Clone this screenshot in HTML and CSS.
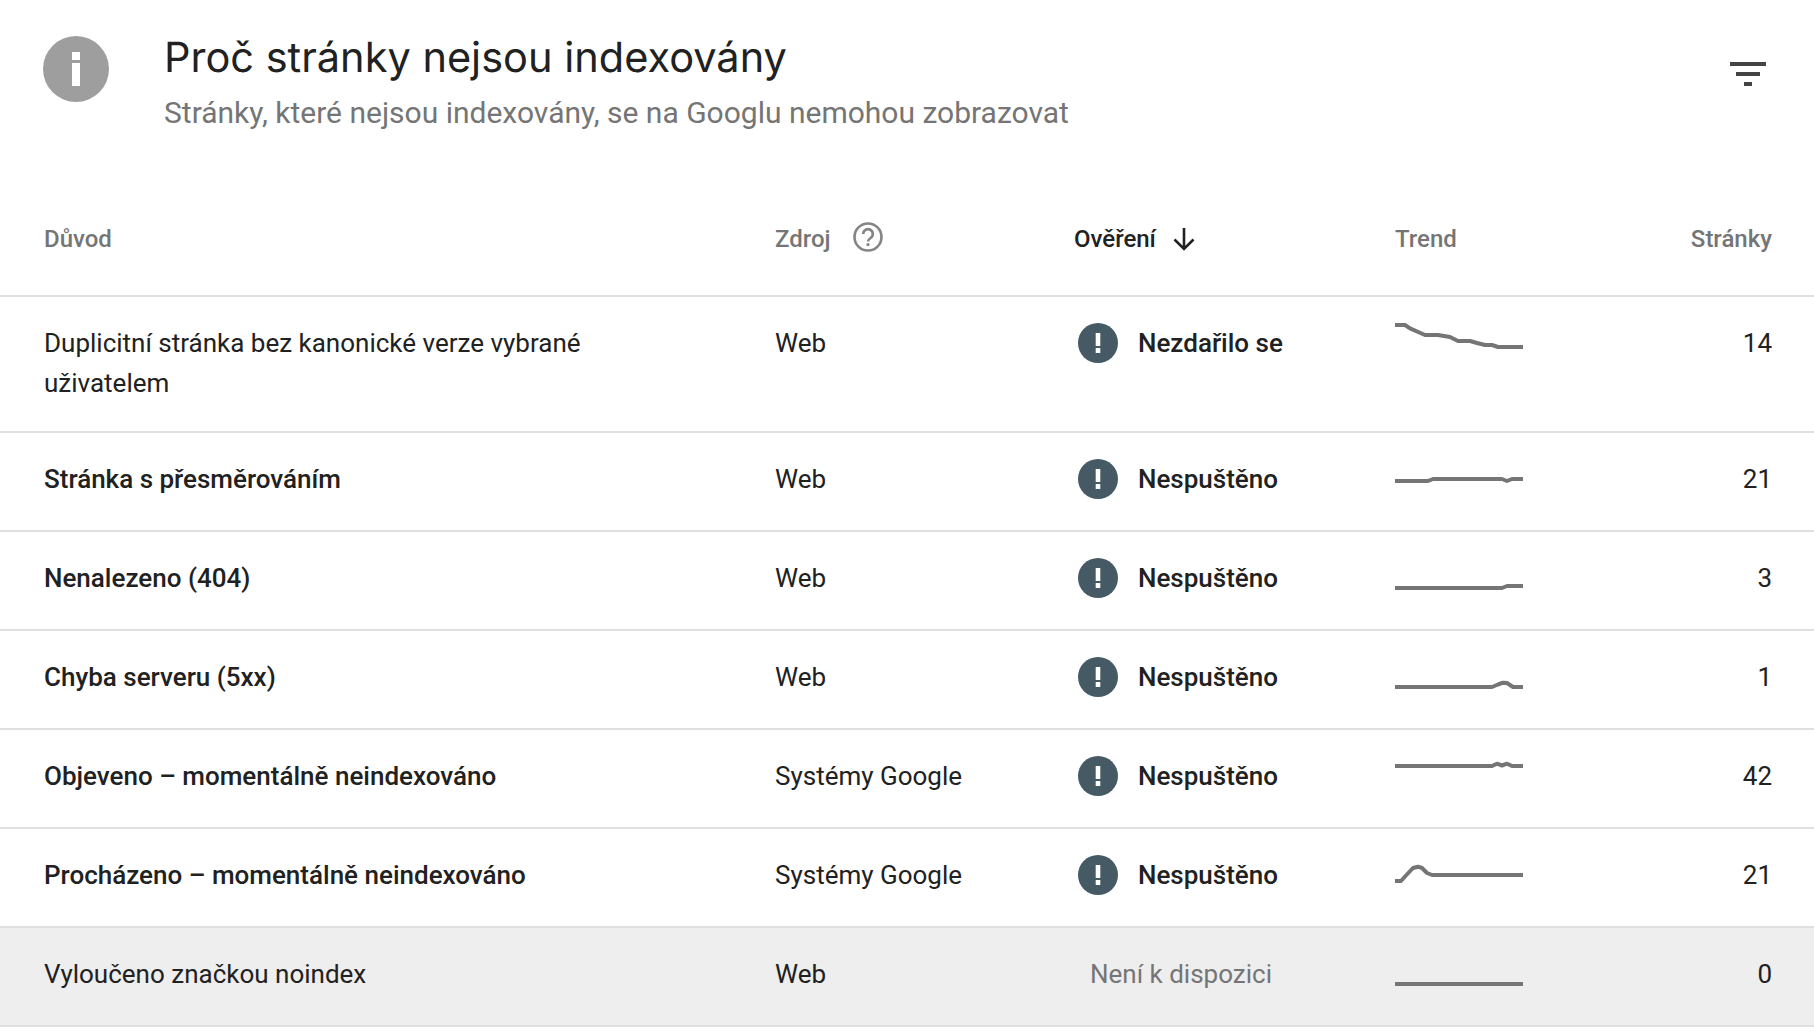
FILE: index.html
```html
<!DOCTYPE html>
<html lang="cs">
<head>
<meta charset="utf-8">
<title>Proč stránky nejsou indexovány</title>
<link rel="stylesheet" href="styles.css">
</head>
<body>
<header class="head">
  <svg class="info" viewBox="0 0 66 66"><circle cx="33" cy="33" r="33" fill="#9e9e9e"/><rect x="29" y="16" width="8" height="8" fill="#fff"/><rect x="29" y="27" width="8" height="23" fill="#fff"/></svg>
  <div class="titles">
    <h1 class="title">Proč stránky nejsou indexovány</h1>
    <p class="sub">Stránky, které nejsou indexovány, se na Googlu nemohou zobrazovat</p>
  </div>
  <svg class="filter" viewBox="0 0 36 24"><rect x="0" y="0" width="36" height="4" fill="#444"/><rect x="6" y="10" width="24" height="4" fill="#444"/><rect x="14" y="20" width="8" height="4" fill="#444"/></svg>
</header>
<div class="row thead">
  <div>Důvod</div>
  <div class="hsrc">Zdroj
    <svg class="help" viewBox="0 0 30 30"><circle cx="15" cy="15" r="13.5" fill="none" stroke="#858585" stroke-width="2.6"/><path d="M10.2 12a4.8 4.8 0 1 1 7.4 4c-1.6 1.1-2.6 1.9-2.6 3.6" fill="none" stroke="#858585" stroke-width="2.6"/><rect x="13.6" y="21.2" width="2.8" height="2.8" fill="#858585"/></svg>
  </div>
  <div class="hsort">Ověření
    <svg class="arrow" viewBox="0 0 24 24"><path d="M12 1v21M2.5 12.5l9.500 9.500 9.500-9.500" fill="none" stroke="#212121" stroke-width="2.6"/></svg>
  </div>
  <div>Trend</div>
  <div class="num">Stránky</div>
</div>
<div class="row first">
  <div class="reason">Duplicitní stránka bez kanonické verze vybrané uživatelem</div>
  <div>Web</div>
  <div class="status"><svg class="warn" viewBox="0 0 40 40"><circle cx="20" cy="20" r="20" fill="#455a64"/><rect x="17.700" y="10" width="4.600" height="13" fill="#fff"/><rect x="17.700" y="25" width="4.600" height="5" fill="#fff"/></svg>Nezdařilo se</div>
  <svg class="spark" viewBox="0 0 128 40"><polyline points="0,2 10,2 15,5.3 30,12 43,12 55,14 63,18 75,18 82,20 90,22 97,22 103,24 128,24"/></svg>
  <div class="num">14</div>
</div>
<div class="row">
  <div class="reason strong">Stránka s přesměrováním</div>
  <div>Web</div>
  <div class="status"><svg class="warn" viewBox="0 0 40 40"><circle cx="20" cy="20" r="20" fill="#455a64"/><rect x="17.700" y="10" width="4.600" height="13" fill="#fff"/><rect x="17.700" y="25" width="4.600" height="5" fill="#fff"/></svg>Nespuštěno</div>
  <svg class="spark" viewBox="0 0 128 40"><polyline points="0,22 33,22 38,20 107,20 112,22 117,20 128,20"/></svg>
  <div class="num">21</div>
</div>
<div class="row">
  <div class="reason strong">Nenalezeno (404)</div>
  <div>Web</div>
  <div class="status"><svg class="warn" viewBox="0 0 40 40"><circle cx="20" cy="20" r="20" fill="#455a64"/><rect x="17.700" y="10" width="4.600" height="13" fill="#fff"/><rect x="17.700" y="25" width="4.600" height="5" fill="#fff"/></svg>Nespuštěno</div>
  <svg class="spark" viewBox="0 0 128 40"><polyline points="0,30 107,30 112,28 128,28"/></svg>
  <div class="num">3</div>
</div>
<div class="row">
  <div class="reason strong">Chyba serveru (5xx)</div>
  <div>Web</div>
  <div class="status"><svg class="warn" viewBox="0 0 40 40"><circle cx="20" cy="20" r="20" fill="#455a64"/><rect x="17.700" y="10" width="4.600" height="13" fill="#fff"/><rect x="17.700" y="25" width="4.600" height="5" fill="#fff"/></svg>Nespuštěno</div>
  <svg class="spark" viewBox="0 0 128 40"><polyline points="0,30 97,30 103,27.5 108,25.7 112,26 118,30 128,30"/></svg>
  <div class="num">1</div>
</div>
<div class="row">
  <div class="reason strong">Objeveno – momentálně neindexováno</div>
  <div>Systémy Google</div>
  <div class="status"><svg class="warn" viewBox="0 0 40 40"><circle cx="20" cy="20" r="20" fill="#455a64"/><rect x="17.700" y="10" width="4.600" height="13" fill="#fff"/><rect x="17.700" y="25" width="4.600" height="5" fill="#fff"/></svg>Nespuštěno</div>
  <svg class="spark" viewBox="0 0 128 40"><polyline points="0,10 97,10 102,7.700 107,9.500 112,7.700 117,10 128,10"/></svg>
  <div class="num">42</div>
</div>
<div class="row">
  <div class="reason strong">Procházeno – momentálně neindexováno</div>
  <div>Systémy Google</div>
  <div class="status"><svg class="warn" viewBox="0 0 40 40"><circle cx="20" cy="20" r="20" fill="#455a64"/><rect x="17.700" y="10" width="4.600" height="13" fill="#fff"/><rect x="17.700" y="25" width="4.600" height="5" fill="#fff"/></svg>Nespuštěno</div>
  <svg class="spark" viewBox="0 0 128 40"><polyline points="0,26 6,26 10,21.5 18,13 23,11.7 27,13 32,18 37,20 128,20"/></svg>
  <div class="num">21</div>
</div>
<div class="row muted">
  <div class="reason">Vyloučeno značkou noindex</div>
  <div>Web</div>
  <div class="na">Není k dispozici</div>
  <svg class="spark" viewBox="0 0 128 40"><polyline points="0,30 128,30"/></svg>
  <div class="num">0</div>
</div>
</body>
</html>
```
FILE: styles.css
```css
* { box-sizing: border-box; }
html, body { margin: 0; background: #fff; }
body {
  font-family: Roboto, "Noto Sans", sans-serif;
  font-size: 26px;
  line-height: 40px;
  color: #212121;
  overflow: hidden;
}
.head {
  display: flex;
  align-items: flex-start;
  height: 195px;
  padding: 36px 48px 0 43px;
}
.info { width: 66px; height: 66px; flex: none; }
.titles { margin-left: 55px; flex: 1; }
.title {
  margin: -6px 0 0;
  font-family: Inter, Roboto, sans-serif;
  font-size: 41.5px;
  line-height: 56px;
  font-weight: 400;
  text-rendering: geometricPrecision;
}
.sub { margin: 7px 0 0; font-size: 30px; line-height: 40px; color: #757575; }
.filter { width: 36px; height: 24px; margin: 26px 0 0; flex: none; }
.row {
  display: grid;
  grid-template-columns: 731px 299px 321px 128px 1fr;
  padding: 26px 42px 31px 44px;
  border-bottom: 2px solid #e0e0e0;
  height: 99px;
}
.row.first { height: 136px; }
.thead {
  height: 102px;
  padding-top: 24px;
  font-size: 24px;
  font-weight: 500;
  color: #757575;
}
.hsrc { display: flex; align-items: center; gap: 22px; height: 40px; }
.help { width: 30px; height: 30px; margin-top: -4px; }
.hsort { display: flex; align-items: center; gap: 16px; height: 40px; color: #212121; }
.arrow { width: 24px; height: 24px; margin-top: -1px; }
.reason { width: 560px; }
.strong { font-weight: 500; }
.status { display: flex; align-items: center; font-weight: 500; padding-left: 4px; height: 40px; }
.warn { width: 40px; height: 40px; margin-right: 20px; flex: none; }
.spark { width: 128px; height: 40px; overflow: visible; }
.spark polyline { fill: none; stroke: #757575; stroke-width: 4; stroke-linejoin: round; }
.num { text-align: right; }
.muted { background: #eee; }
.na { padding-left: 16px; color: #757575; }
```
